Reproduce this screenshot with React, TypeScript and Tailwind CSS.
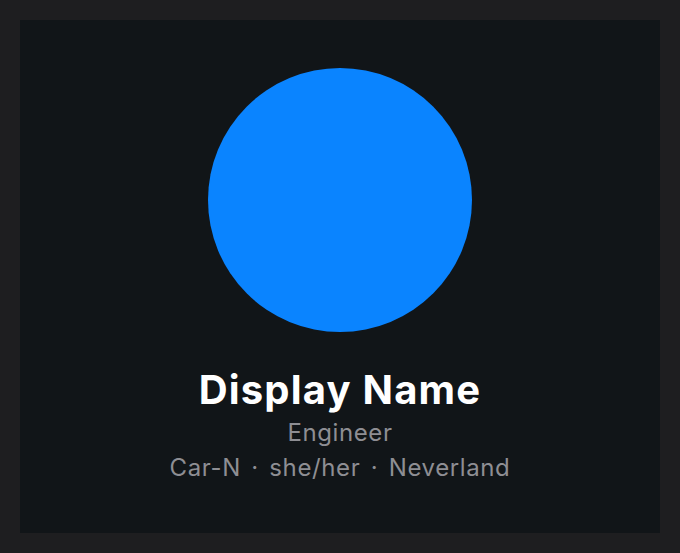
export default function App() {
  return (
    <div className="w-[680px] h-[553px] bg-[#1e1e20] p-5" style={{ fontFamily: 'Inter, "Noto Sans", sans-serif' }}>
      <div className="h-full bg-[#111518] flex flex-col items-center pt-12">
        <div className="w-[264px] h-[264px] rounded-full bg-[#0a84ff]" />
        <div className="mt-[34px] text-[40px] leading-[48px] font-bold text-white tracking-[1.2px]">Display Name</div>
        <div className="mt-[3px] text-[24px] leading-[32px] text-[#8e8e93] tracking-[0.6px]">Engineer</div>
        <div className="mt-[3px] flex items-center text-[24px] leading-[32px] text-[#8e8e93] tracking-[0.6px]">
          <span>Car-N</span>
          <span className="mx-[10.5px]">·</span>
          <span>she/her</span>
          <span className="mx-[10.5px]">·</span>
          <span>Neverland</span>
        </div>
      </div>
    </div>
  );
}
